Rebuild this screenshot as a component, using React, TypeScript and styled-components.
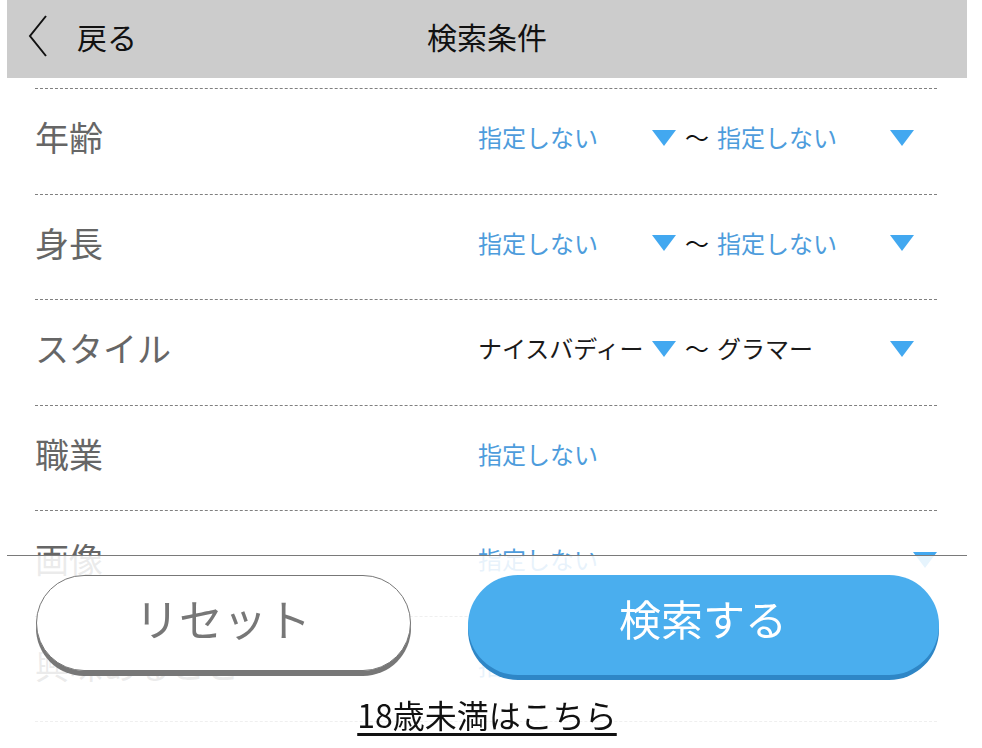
import React from "react";
import styled, { createGlobalStyle } from "styled-components";

const Global = createGlobalStyle`
  html, body {
    margin: 0;
    padding: 0;
    overflow: hidden;
    background: #ffffff;
  }
  body {
    font-family: "Noto Sans CJK JP", "Noto Sans", sans-serif;
  }
`;

const Page = styled.div`
  width: 960px;
  margin-left: 7px;
  min-height: 748px;
  background: #fff;
`;

const Header = styled.header`
  height: 78px;
  box-sizing: border-box;
  padding-bottom: 6px;
  background: #cccccc;
  display: grid;
  grid-template-columns: 1fr auto 1fr;
  align-items: center;
`;

const Back = styled.div`
  display: flex;
  align-items: center;
  gap: 29px;
  padding-left: 21px;
  font-size: 30px;
  line-height: 1;
  color: #111;
`;

const Title = styled.h1`
  margin: 0;
  font-size: 30px;
  font-weight: 400;
  line-height: 1;
  color: #111;
`;

const List = styled.ul`
  list-style: none;
  margin: 10px 30px 0 28px;
  padding: 0;
  border-top: 1px dashed #808080;
`;

const Row = styled.li`
  height: 104.5px;
  box-sizing: content-box;
  border-bottom: 1px dashed #808080;
  display: flex;
  align-items: center;
  > * {
    position: relative;
    top: -4px;
  }
`;

const Label = styled.span`
  width: 443px;
  font-size: 34px;
  line-height: 1;
  color: #666;
`;

const Range = styled.div`
  display: flex;
  align-items: center;
`;

const Select = styled.div<{ $width?: number; $grow?: boolean }>`
  display: flex;
  align-items: center;
  justify-content: space-between;
  width: ${(p) => (p.$width ? `${p.$width}px` : "auto")};
  flex: ${(p) => (p.$grow ? 1 : "none")};
`;

const Value = styled.span<{ $set?: boolean }>`
  font-size: 24px;
  line-height: 1;
  white-space: nowrap;
  color: ${(p) => (p.$set ? "#1a1a1a" : "#4d9cdc")};
`;

const Arrow = styled.span`
  width: 0;
  height: 0;
  border-left: 12px solid transparent;
  border-right: 12px solid transparent;
  border-top: 16px solid #42a8f0;
  margin-top: 1px;
`;

const Tilde = styled.span`
  font-size: 24px;
  line-height: 1;
  color: #111;
  margin: 0 8px 0 9px;
`;

const SingleWrap = styled.div`
  flex: 1;
  display: flex;
`;

const Footer = styled.footer`
  position: fixed;
  left: 7px;
  bottom: 0;
  width: 960px;
  height: 193px;
  border-top: 1px solid #7a7a7a;
  background: rgba(255, 255, 255, 0.87);
  display: flex;
  flex-direction: column;
  align-items: center;
  padding-top: 19px;
  box-sizing: border-box;
`;

const Buttons = styled.div`
  display: flex;
  align-items: flex-start;
  gap: 57px;
  width: 903px;
`;

const ResetButton = styled.button`
  width: 375px;
  height: 96px;
  border-radius: 48px;
  border: 1px solid #777;
  background: #fff;
  box-shadow: 0 5px 0 #777;
  font-family: inherit;
  font-size: 44px;
  color: #777;
  padding: 0 0 10px;
  line-height: 1;
`;

const SearchButton = styled.button`
  flex: 1;
  height: 100px;
  border-radius: 50px;
  border: none;
  background: #4aaeee;
  box-shadow: 0 5px 0 #2e86c6;
  font-family: inherit;
  font-size: 42px;
  color: #fff;
  padding: 0 0 14px;
  line-height: 1;
`;

const UnderLink = styled.a`
  margin-top: 22px;
  font-size: 32px;
  line-height: 1.1;
  color: #111;
  text-decoration: underline;
  text-decoration-thickness: 3px;
  text-underline-offset: 5px;
`;

type RangeRow = { label: string; from: string; to: string; set?: boolean };
type SingleRow = { label: string; value: string; arrow?: boolean };

const ranges: RangeRow[] = [
  { label: "年齢", from: "指定しない", to: "指定しない" },
  { label: "身長", from: "指定しない", to: "指定しない" },
  { label: "スタイル", from: "ナイスバディー", to: "グラマー", set: true },
];

const singles: SingleRow[] = [
  { label: "職業", value: "指定しない" },
  { label: "画像", value: "指定しない", arrow: true },
  { label: "興味あること", value: "指定しない" },
];

const Chevron = () => (
  <svg width="20" height="42" viewBox="0 0 20 42" fill="none">
    <path d="M18 1 L2 21 L18 41" stroke="#111" strokeWidth="2" />
  </svg>
);

export default function App() {
  return (
    <>
      <Global />
      <Page>
        <Header>
          <Back>
            <Chevron />
            <span>戻る</span>
          </Back>
          <Title>検索条件</Title>
          <div />
        </Header>
        <List>
          {ranges.map((r) => (
            <Row key={r.label}>
              <Label>{r.label}</Label>
              <Range>
                <Select $width={198}>
                  <Value $set={r.set}>{r.from}</Value>
                  <Arrow />
                </Select>
                <Tilde>～</Tilde>
                <Select $width={197}>
                  <Value $set={r.set}>{r.to}</Value>
                  <Arrow />
                </Select>
              </Range>
            </Row>
          ))}
          {singles.map((s) => (
            <Row key={s.label}>
              <Label>{s.label}</Label>
              <SingleWrap>
                <Select $grow>
                  <Value>{s.value}</Value>
                  {s.arrow && <Arrow />}
                </Select>
              </SingleWrap>
            </Row>
          ))}
        </List>
      </Page>
      <Footer>
        <Buttons>
          <ResetButton>リセット</ResetButton>
          <SearchButton>検索する</SearchButton>
        </Buttons>
        <UnderLink href="#">18歳未満はこちら</UnderLink>
      </Footer>
    </>
  );
}
